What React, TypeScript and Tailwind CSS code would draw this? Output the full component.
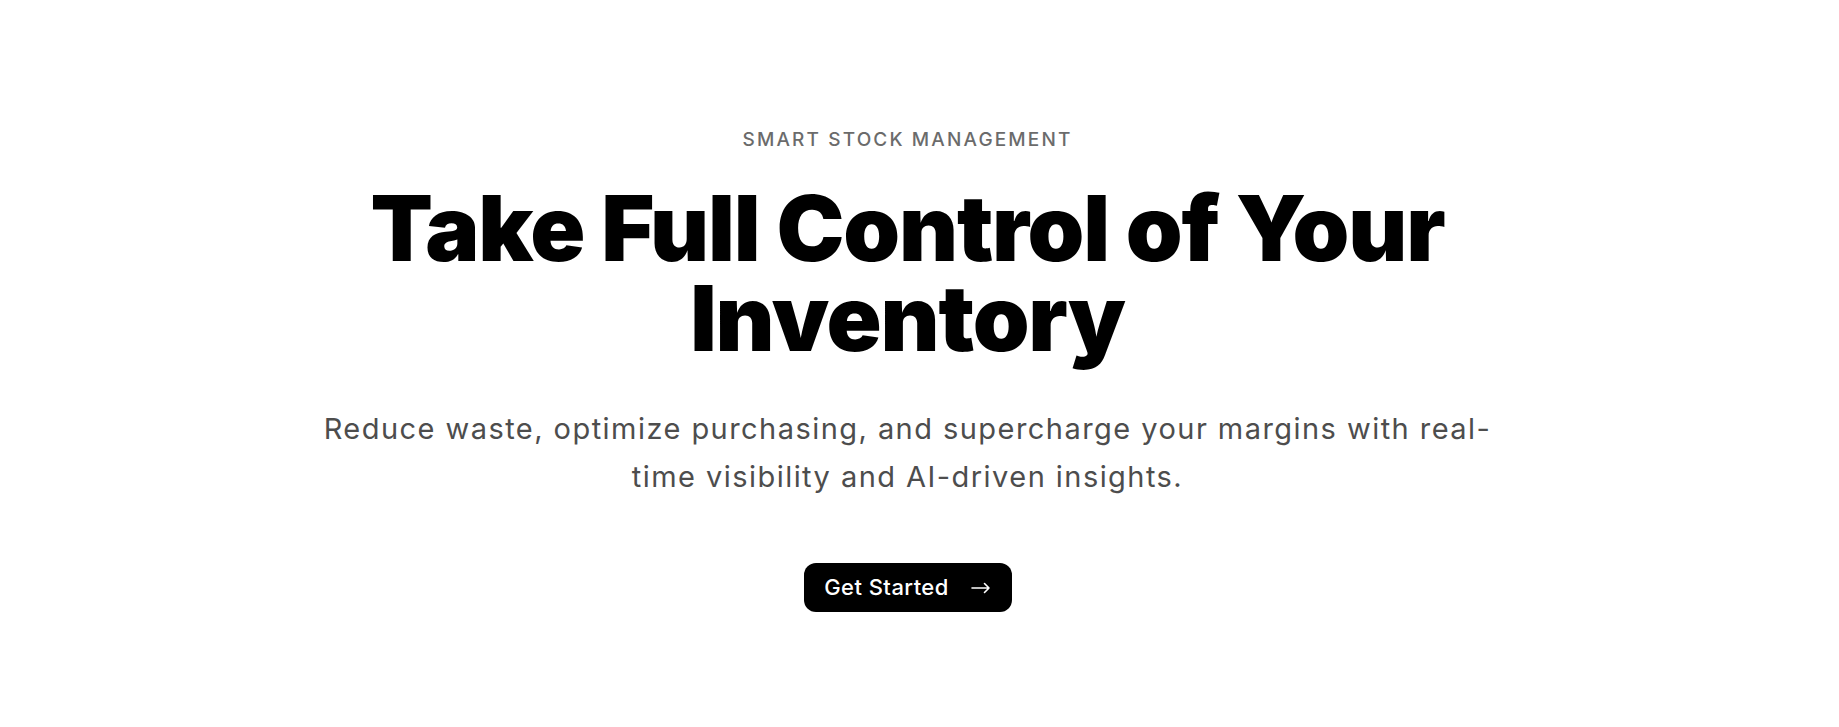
import React from "react";

export default function App() {
  return (
    <section className="w-full h-[727px] bg-white pr-[24px] font-['Inter','Liberation_Sans',sans-serif]">
      {/* Hero */}
      <div className="flex flex-col items-center text-center pt-[128px]">
        <p className="text-[19px] leading-[24px] tracking-[0.113em] text-[#6b6b6b] font-medium uppercase">
          Smart Stock Management
        </p>

        <h1 className="mt-[31px] text-[91px] leading-[90px] font-black text-black tracking-[-0.013em]">
          <span className="block">Take Full Control of Your</span>
          <span className="block">Inventory</span>
        </h1>

        <p className="mt-[42px] text-[29px] leading-[48px] tracking-[0.05em] text-[#4d4d4d]">
          <span className="block">Reduce waste, optimize purchasing, and supercharge your margins with real-</span>
          <span className="block">time visibility and AI-driven insights.</span>
        </p>

        <button className="mt-[62px] h-[49px] w-[208px] rounded-xl bg-black text-white flex items-center justify-center gap-[22px]">
          <span className="text-[22px] font-medium tracking-[0.02em]">Get Started</span>
          <svg width="20" height="12" viewBox="0 0 20 12" fill="none" stroke="white" strokeWidth="1.6" strokeLinecap="round" strokeLinejoin="round">
            <path d="M1 6h17M13.5 1.5 18 6l-4.5 4.5" />
          </svg>
        </button>
      </div>
    </section>
  );
}
